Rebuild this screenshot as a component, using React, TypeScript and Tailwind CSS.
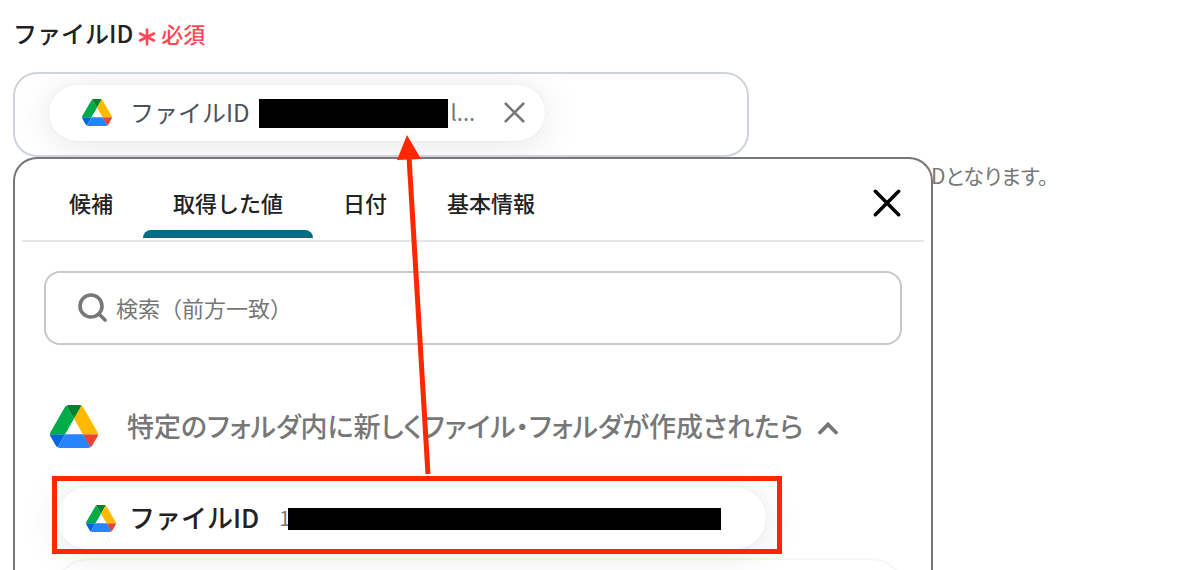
import React, { useState } from "react";

const tabs = ["候補", "取得した値", "日付", "基本情報"];

const DriveIcon = ({ className }: { className: string }) => (
  <svg viewBox="0 0 87.3 78" className={className} aria-hidden="true">
    <path d="m6.6 66.85 3.85 6.65c.8 1.4 1.95 2.5 3.3 3.3l13.75-23.8h-27.5c0 1.55.4 3.1 1.2 4.5z" fill="#0066da" />
    <path d="m43.65 25-13.75-23.8c-1.35.8-2.5 1.9-3.3 3.3l-25.4 44a9.06 9.06 0 0 0 -1.2 4.5h27.5z" fill="#00ac47" />
    <path d="m73.55 76.8c1.35-.8 2.5-1.9 3.3-3.3l1.6-2.75 7.65-13.25c.8-1.4 1.2-2.95 1.2-4.5h-27.5l5.85 11.5z" fill="#ea4335" />
    <path d="m43.65 25 13.75-23.8c-1.35-.8-2.9-1.2-4.5-1.2h-18.5c-1.6 0-3.15.45-4.5 1.2z" fill="#00832d" />
    <path d="m59.8 53h-32.3l-13.75 23.8c1.35.8 2.9 1.2 4.5 1.2h50.8c1.6 0 3.15-.45 4.5-1.2z" fill="#2684fc" />
    <path d="m73.4 26.5-12.7-22c-.8-1.4-1.95-2.5-3.3-3.3l-13.75 23.8 16.15 28h27.45c0-1.55-.4-3.1-1.2-4.5z" fill="#ffba00" />
  </svg>
);

const CrossIcon = ({ className }: { className: string }) => (
  <svg viewBox="0 0 24 24" fill="none" stroke="currentColor" strokeLinecap="round" className={className} aria-hidden="true">
    <path d="M2 2l20 20M22 2L2 22" />
  </svg>
);

const App = () => {
  const [active, setActive] = useState("取得した値");
  const [query, setQuery] = useState("");

  return (
    <main className="relative h-screen overflow-hidden bg-white px-[13px] font-['Noto_Sans_CJK_JP',sans-serif] text-[#222222]">
      <div className="flex h-[72px] items-center pb-[6px]">
        <h1 className="text-2xl font-medium">ファイルID</h1>
        <span className="flex items-center gap-[5px] pl-[5px] text-[22px] font-medium text-[#ff4757]">
          <svg viewBox="0 0 18 18" fill="none" stroke="currentColor" strokeWidth="2.6" strokeLinecap="round" className="mt-2 size-[18px]" aria-hidden="true">
            <path d="M9 1.500v15M2 5.500l14 7M16 5.500l-14 7" />
          </svg>
          必須
        </span>
      </div>

      <div className="flex h-[85px] w-full max-w-[736px] items-center overflow-hidden rounded-3xl border-2 border-[#cfd4da] pr-4 pb-1 pl-[34px]">
        <div className="flex h-[56px] items-center rounded-full bg-white pr-5 pl-[33px] shadow-[0_4px_40px_rgba(0,0,0,0.1),0_0_3px_rgba(0,0,0,0.06)]">
          <DriveIcon className="h-[27px] w-[30px]" />
          <span className="pb-[2px] pl-[18px] text-2xl text-[#4b525c]">ファイルID</span>
          <span className="mt-[2px] ml-[9px] h-[29px] w-[189px] bg-black" />
          <span className="w-[56px] pb-[2px] pl-[3px] text-[22px] text-[#777777]">l...</span>
          <button type="button" aria-label="削除" className="text-[#777777]">
            <CrossIcon className="size-[21px] stroke-3" />
          </button>
        </div>
      </div>

      <div className="flex items-start">
        <section className="w-full max-w-[920px] shrink rounded-t-3xl border-2 border-b-0 border-[#777777] px-[7px]">
          <div className="flex h-[83px] items-stretch justify-between border-b-2 border-[#e6e6e6] pr-[23px] pl-[17px]">
            <div role="tablist" className="flex">
              {tabs.map((tab) => (
                <button
                  key={tab}
                  type="button"
                  role="tab"
                  aria-selected={tab === active}
                  onClick={() => setActive(tab)}
                  className="flex flex-col items-stretch justify-end pb-[2px] text-[22px] leading-8 font-medium"
                >
                  <span className="px-[30px] pb-3">{tab}</span>
                  <span className={tab === active ? "h-2 rounded-t-lg bg-[#066b85]" : "h-2"} />
                </button>
              ))}
            </div>
            <button type="button" aria-label="閉じる" className="pt-[6px] text-black">
              <CrossIcon className="size-[28px] stroke-3" />
            </button>
          </div>

          <div className="px-[22px] pt-[29px]">
            <label className="flex h-[74px] items-center gap-[9px] rounded-2xl border-2 border-[#c8c8c8] px-[31px] pb-[2px] text-[22px]">
              <svg viewBox="0 0 30 30" fill="none" stroke="#777777" strokeWidth="3.6" strokeLinecap="round" className="size-[30px] shrink-0" aria-hidden="true">
                <circle cx="14" cy="14" r="11" />
                <path d="M22 22l6 6" />
              </svg>
              <input
                type="text"
                aria-label="検索"
                placeholder="検索（前方一致）"
                value={query}
                onChange={(e) => setQuery(e.target.value)}
                className="min-w-0 flex-1 outline-none placeholder:text-[#777777]"
              />
            </label>
          </div>

          <button type="button" className="mt-[59px] flex h-11 items-center pl-7 text-[27px] font-medium text-[#777777]">
            <DriveIcon className="h-[43px] w-[48px]" />
            <span className="pr-[14px] pl-[29px] [font-feature-settings:'palt']">特定のフォルダ内に新しくファイル・フォルダが作成されたら</span>
            <svg viewBox="0 0 22 14" fill="none" stroke="currentColor" strokeWidth="3.8" strokeLinecap="round" className="mt-1 h-[14px] w-[22px]" aria-hidden="true">
              <path d="M3 11.500L11 3.500l8 8" />
            </svg>
          </button>

          <div className="flex flex-col items-start gap-[11px] pt-[39px] pl-[35px]">
            <button type="button" className="relative flex h-[62px] w-[709px] items-center rounded-full bg-white pl-[29px] text-left shadow-[0_4px_40px_rgba(0,0,0,0.1),0_0_3px_rgba(0,0,0,0.06)]">
              <DriveIcon className="h-[27px] w-[30px]" />
              <span className="pr-5 pb-1 pl-[13px] text-[26px] font-medium">ファイルID</span>
              <span className="w-[9px] text-xl text-[#777777]">1</span>
              <span className="mt-[2px] h-[22px] w-[433px] bg-black" />
              <span className="absolute -top-[11px] -right-4 -bottom-[5px] -left-[5px] border-5 border-[#ff2600]" />
            </button>
            <div className="h-[62px] w-[846px] rounded-full bg-white shadow-[0_0_3px_rgba(0,0,0,0.12)]" />
          </div>
        </section>
        <p className="-ml-[2px] shrink-0 pt-[3px] text-[21px] text-[#777777] [font-feature-settings:'palt']">Dとなります。</p>
      </div>

      <svg width="34" height="344" viewBox="0 0 34 344" className="absolute top-[133px] left-[397px]" aria-hidden="true">
        <path d="M12 24L31 341" stroke="#ff2600" strokeWidth="5" />
        <path d="M10 2L24 26L0 27Z" fill="#ff2600" />
      </svg>
    </main>
  );
};

export default App;
